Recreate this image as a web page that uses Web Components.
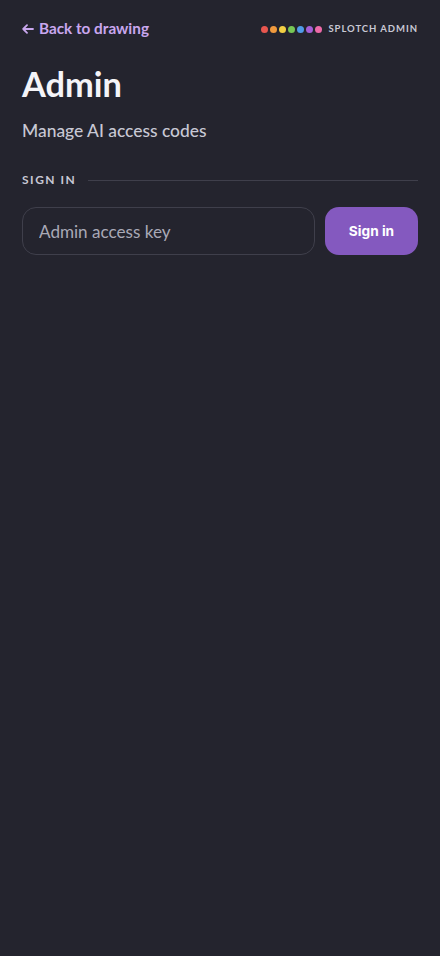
<!DOCTYPE html>
<html lang="en"><head><meta charset="utf-8"><title>Admin</title>
<style>
html,body{margin:0;padding:0;background:#24242e;height:100%}
body{font-family:Lato,"Noto Sans",sans-serif;color:#f2f2f7}
</style></head><body>
<admin-page>
  <admin-header slot="header"></admin-header>
  <page-title slot="title" heading="Admin" sub="Manage AI access codes"></page-title>
  <section-label slot="section">SIGN IN</section-label>
  <signin-form slot="form"></signin-form>
</admin-page>
<script>
function def(name,html,init){customElements.define(name,class extends HTMLElement{connectedCallback(){if(this.shadowRoot)return;const r=this.attachShadow({mode:'open'});r.innerHTML=html;if(init)init(this,r);}});}
def('admin-page',`<style>:host{display:flex;flex-direction:column;box-sizing:border-box;min-height:956px;padding:19px 22px 0}</style><slot name="header"></slot><slot name="title"></slot><slot name="section"></slot><slot name="form"></slot>`);
def('admin-header',`<style>
:host{display:flex;align-items:center;justify-content:space-between;height:20px}
a{display:inline-flex;align-items:center;gap:5px;color:#c9a7ee;font:700 15.3px/18px Lato,sans-serif;text-decoration:none;padding-bottom:2px}
svg{display:block;margin-top:1px}
.b{display:flex;align-items:center;gap:6px}
.d{display:flex;gap:2px}
i{display:block;width:7px;height:7px;border-radius:50%}
span{font:700 9.5px/14px Lato,sans-serif;letter-spacing:.95px;color:#c8c8d4}
</style>
<a href="#"><svg width="12" height="10" viewBox="0 0 12 10" fill="none" stroke="#c9a7ee" stroke-width="1.8" stroke-linecap="round" stroke-linejoin="round"><path d="M11 5H1.2M5 1.2L1.2 5 5 8.8"/></svg>Back to drawing</a>
<div class="b"><div class="d"><i style="background:#e8564f"></i><i style="background:#f09a3e"></i><i style="background:#f2cf44"></i><i style="background:#77c655"></i><i style="background:#4f9be8"></i><i style="background:#a55fd6"></i><i style="background:#ee6aa8"></i></div><span>SPLOTCH ADMIN</span></div>`);
def('page-title',`<style>
:host{display:block;margin-top:23px}
h1{margin:0;font:700 34.4px/44px Lato,sans-serif;color:#f4f4f8}
p{margin:13px 0 0;font:500 17.4px/24px Lato,sans-serif;color:#c8c8d4}
</style><h1></h1><p></p>`,(e,r)=>{r.querySelector('h1').textContent=e.getAttribute('heading');r.querySelector('p').textContent=e.getAttribute('sub');});
def('section-label',`<style>
:host{display:flex;align-items:center;gap:12px;margin-top:28px;height:18px;font:700 12px/18px Lato,sans-serif;letter-spacing:1.5px;color:#c8c8d4}
div{flex:1;height:1px;background:#3f3f4b}
</style><slot></slot><div></div>`);
def('signin-form',`<style>
:host{display:flex;gap:10px;margin-top:18px;height:48px}
input{flex:1;min-width:0;box-sizing:border-box;height:48px;padding:0 16px;background:transparent;border:1px solid #3f3f4b;border-radius:14px;outline:none;color:#f2f2f7;font:400 17.1px Lato,sans-serif}
input::placeholder{color:#a9a9b6;opacity:1}
button{width:93px;height:48px;border:0;border-radius:14px;background:#8459bf;color:#fff;font:700 13.7px Inter,sans-serif;padding:0}
</style><input type="password" placeholder="Admin access key" aria-label="Admin access key"><button type="button">Sign in</button>`);
</script>
</body></html>
